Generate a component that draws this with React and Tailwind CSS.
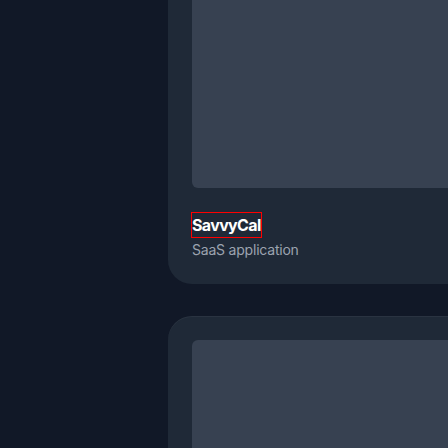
export default function App() {
  return (
    <div className="h-[448px] w-[448px] overflow-hidden bg-[#111827] font-['Inter',sans-serif]">
      <div className="-mt-[96px] ml-[168px] flex w-[360px] flex-col gap-8">
        <div className="rounded-3xl bg-[#1f2937] px-6 pt-6 pb-[22px] shadow-[inset_0_1px_0_0_rgba(255,255,255,0.05)]">
          <div className="h-[260px] rounded-md bg-[#374151]" />
          <div className="mt-[25px]">
            <span className="inline-block text-base leading-6 font-bold tracking-[-0.04em] text-white outline outline-1 outline-[#ff0000]">
              SavvyCal
            </span>
            <p className="mt-px text-sm leading-6 tracking-[-0.015em] text-[#9ca3af]">SaaS application</p>
          </div>
        </div>
        <div className="h-[320px] rounded-3xl bg-[#1f2937] p-6 shadow-[inset_0_1px_0_0_rgba(255,255,255,0.05)]">
          <div className="h-[260px] rounded-md bg-[#374151]" />
        </div>
      </div>
    </div>
  );
}
